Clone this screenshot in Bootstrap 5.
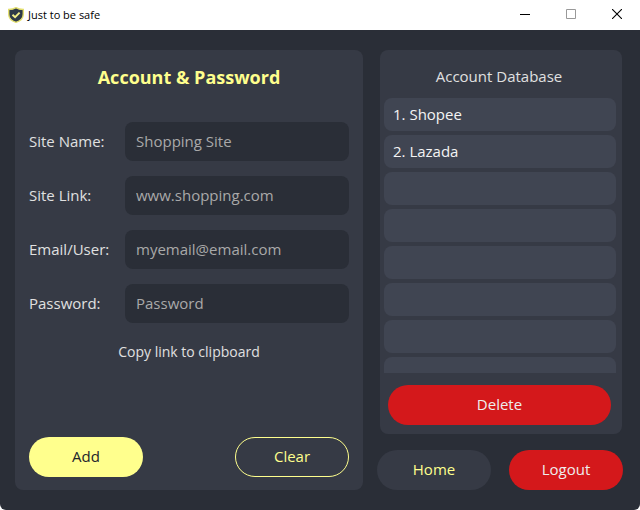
<!DOCTYPE html>
<html lang="en">
<head>
<meta charset="utf-8">
<meta name="viewport" content="width=device-width, initial-scale=1">
<title>Just to be safe</title>
<link href="https://cdn.jsdelivr.net/npm/bootstrap@5.3.0/dist/css/bootstrap.min.css" rel="stylesheet">
<style>
  :root {
    --ink: #2a2e37;
    --panel: #363a45;
    --row: #404552;
    --lemon: #ffff8d;
    --danger: #d4181b;
    --text: #e0e0e0;
  }
  body { font-family: "Segoe UI", "Open Sans", "Noto Sans", sans-serif; font-size: 15px; line-height: 20px; background: #fff; color: var(--text); }
  .titlebar { height: 30px; padding-left: 8px; color: #000; font-size: 11px; }
  .win-btn { width: 46px; height: 30px; padding: 0 0 2px; }
  .app-main { background: var(--ink); border-radius: 0 0 6px 6px; padding: 20px 17px 20px 15px; gap: 14px; }
  .panel { background: var(--panel); border-radius: 8px; }
  .form-panel { flex: 348 1 348px; padding: 0 14px 13px; }
  .side { flex: 246 1 246px; gap: 16px; }
  .form-title { font-size: 18px; line-height: 24px; font-weight: 700; color: var(--lemon); padding: 15px 0 33px; }
  .fields { gap: 15px; }
  .field-label { width: 96px; padding-bottom: 2px; }
  .field-input, .field-input:focus { height: 39px; min-width: 0; padding: 0 11px 2px; border: 0; border-radius: 8px; background: var(--ink); color: var(--text); font-size: 15px; }
  .field-input::placeholder { color: #a9a9a9; opacity: 1; }
  .copy-link { margin-top: 19px; color: var(--text); font-size: 14px; }
  .pill { --bs-btn-font-size: 15px; --bs-btn-line-height: 20px; width: 114px; height: 40px; border-radius: 20px; padding: 0 0 2px; }
  .pill-lemon, .pill-lemon:hover { background: var(--lemon); color: #22252c; }
  .pill-outline, .pill-outline:hover { border: 1px solid var(--lemon); color: var(--lemon); }
  .pill-dark, .pill-dark:hover { background: var(--panel); color: var(--lemon); }
  .pill-red, .pill-red:hover { background: var(--danger); color: #eee; }
  .db-panel { margin: 0 1px 0 3px; }
  .db-title { font-size: 15px; line-height: 20px; padding: 16px 4px 12px 0; }
  .db-list { flex: 1 1 0; gap: 4px; margin: 0 6px 0 4px; border-radius: 0; }
  .db-item, .db-item:hover, .db-item:focus { flex: none; height: 33px; padding: 0 9px 2px; border: 0; border-radius: 8px !important; background: var(--row); color: #f4f4f4; }
  .db-footer { padding: 12px 11px 9px 8px; }
</style>
<script src="https://cdn.jsdelivr.net/npm/bootstrap@5.3.0/dist/js/bootstrap.bundle.min.js"></script>
</head>
<body>
<div class="d-flex flex-column vh-100">
  <header class="titlebar d-flex align-items-center flex-shrink-0">
    <svg width="16" height="16" viewBox="0 0 16 16" aria-hidden="true">
      <path d="M8 .7C6 2 3.500 2.500.7 2.500V7c0 4.200 3 7 7.300 8.300C12.300 14 15.300 11.200 15.300 7V2.500C12.500 2.500 10 2 8 .7z" fill="#2e3a48" stroke="#e3df6e" stroke-width="1.400"/>
      <path d="M4.500 7.700l2.600 2.500 4.500-4.500" fill="none" stroke="#f4f08a" stroke-width="1.900"/>
    </svg>
    <span class="ps-1 me-auto">Just to be safe</span>
    <button type="button" class="win-btn btn border-0 rounded-0 d-flex align-items-center justify-content-center" aria-label="Minimize">
      <svg width="10" height="10" viewBox="0 0 10 10"><path d="M0 5.500h10" stroke="#000"/></svg>
    </button>
    <button type="button" class="win-btn btn border-0 rounded-0 d-flex align-items-center justify-content-center" aria-label="Maximize">
      <svg width="10" height="10" viewBox="0 0 10 10"><path d="M.5.5h9v9h-9z" fill="none" stroke="#999"/></svg>
    </button>
    <button type="button" class="win-btn btn border-0 rounded-0 d-flex align-items-center justify-content-center" aria-label="Close">
      <svg width="10" height="10" viewBox="0 0 10 10"><path d="M0 0l10 10M10 0L0 10" stroke="#000" stroke-width="1.100"/></svg>
    </button>
  </header>

  <main class="app-main d-flex flex-grow-1">
    <form class="panel form-panel d-flex flex-column">
      <h1 class="form-title text-center mb-0">Account &amp; Password</h1>
      <div class="fields d-flex flex-column">
        <div class="d-flex align-items-center">
          <label class="field-label flex-shrink-0" for="siteName">Site Name:</label>
          <input class="form-control field-input" id="siteName" type="text" placeholder="Shopping Site">
        </div>
        <div class="d-flex align-items-center">
          <label class="field-label flex-shrink-0" for="siteLink">Site Link:</label>
          <input class="form-control field-input" id="siteLink" type="text" placeholder="www.shopping.com">
        </div>
        <div class="d-flex align-items-center">
          <label class="field-label flex-shrink-0" for="emailUser">Email/User:</label>
          <input class="form-control field-input" id="emailUser" type="text" placeholder="myemail@email.com">
        </div>
        <div class="d-flex align-items-center">
          <label class="field-label flex-shrink-0" for="password">Password:</label>
          <input class="form-control field-input" id="password" type="password" placeholder="Password">
        </div>
      </div>
      <a class="copy-link text-decoration-none align-self-center" href="#">Copy link to clipboard</a>
      <div class="d-flex justify-content-between mt-auto">
        <button type="button" class="btn border-0 pill pill-lemon">Add</button>
        <button type="reset" class="btn pill pill-outline">Clear</button>
      </div>
    </form>

    <div class="side d-flex flex-column">
      <section class="panel db-panel d-flex flex-column flex-grow-1">
        <h2 class="db-title text-center fw-normal mb-0">Account Database</h2>
        <div class="db-list list-group overflow-hidden">
          <button type="button" class="list-group-item list-group-item-action db-item">1. Shopee</button>
          <button type="button" class="list-group-item list-group-item-action db-item">2. Lazada</button>
          <button type="button" class="list-group-item list-group-item-action db-item" aria-label="Empty slot 3"></button>
          <button type="button" class="list-group-item list-group-item-action db-item" aria-label="Empty slot 4"></button>
          <button type="button" class="list-group-item list-group-item-action db-item" aria-label="Empty slot 5"></button>
          <button type="button" class="list-group-item list-group-item-action db-item" aria-label="Empty slot 6"></button>
          <button type="button" class="list-group-item list-group-item-action db-item" aria-label="Empty slot 7"></button>
          <button type="button" class="list-group-item list-group-item-action db-item" aria-label="Empty slot 8"></button>
        </div>
        <div class="db-footer">
          <button type="button" class="btn border-0 pill pill-red w-100">Delete</button>
        </div>
      </section>
      <div class="d-flex justify-content-between">
        <button type="button" class="btn border-0 pill pill-dark">Home</button>
        <button type="button" class="btn border-0 pill pill-red">Logout</button>
      </div>
    </div>
  </main>
</div>
</body>
</html>
